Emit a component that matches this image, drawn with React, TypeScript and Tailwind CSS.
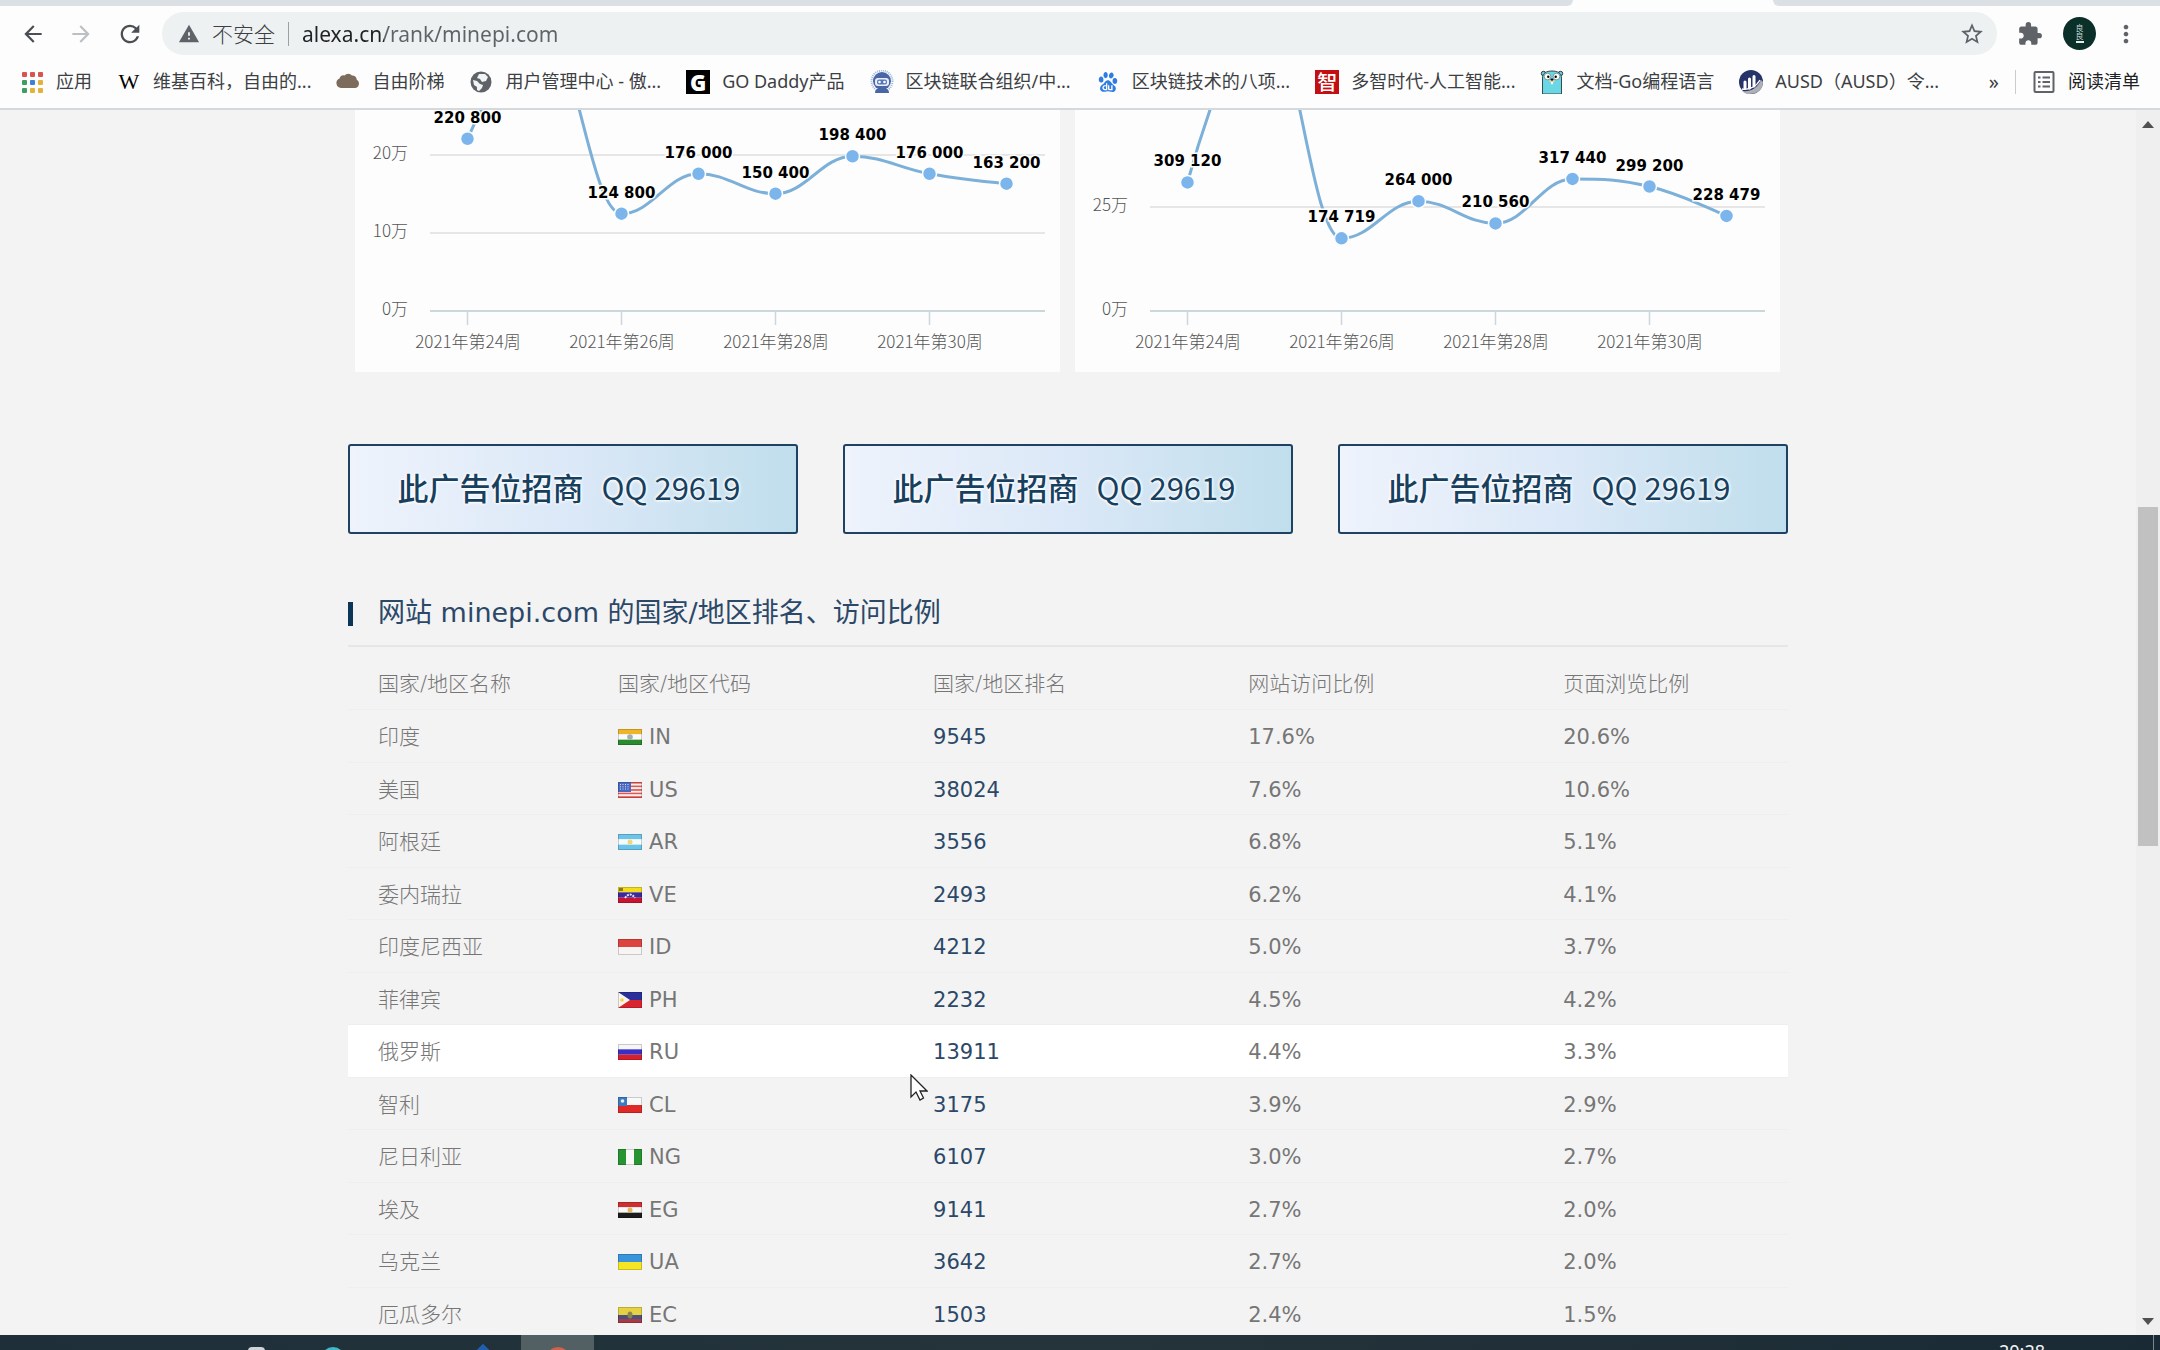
import React from 'react';
import {
  MdArrowBack,
  MdArrowForward,
  MdExtension,
  MdMoreVert,
  MdRefresh,
  MdStarBorder,
  MdWarning,
} from 'react-icons/md';
import { SiBaidu } from 'react-icons/si';

const bookmarks = [
  { icon: 'apps', label: '应用' },
  { icon: 'wiki', label: '维基百科，自由的...' },
  { icon: 'cloud', label: '自由阶梯' },
  { icon: 'globe', label: '用户管理中心 - 傲...' },
  { icon: 'godaddy', label: 'GO Daddy产品' },
  { icon: 'robot', label: '区块链联合组织/中...' },
  { icon: 'baidu', label: '区块链技术的八项...' },
  { icon: 'zhi', label: '多智时代-人工智能...' },
  { icon: 'gopher', label: '文档-Go编程语言' },
  { icon: 'ausd', label: 'AUSD（AUSD）令...' },
];

const countries = [
  { name: '印度', code: 'IN', rank: '9545', visits: '17.6%', views: '20.6%' },
  { name: '美国', code: 'US', rank: '38024', visits: '7.6%', views: '10.6%' },
  { name: '阿根廷', code: 'AR', rank: '3556', visits: '6.8%', views: '5.1%' },
  { name: '委内瑞拉', code: 'VE', rank: '2493', visits: '6.2%', views: '4.1%' },
  { name: '印度尼西亚', code: 'ID', rank: '4212', visits: '5.0%', views: '3.7%' },
  { name: '菲律宾', code: 'PH', rank: '2232', visits: '4.5%', views: '4.2%' },
  { name: '俄罗斯', code: 'RU', rank: '13911', visits: '4.4%', views: '3.3%', active: true },
  { name: '智利', code: 'CL', rank: '3175', visits: '3.9%', views: '2.9%' },
  { name: '尼日利亚', code: 'NG', rank: '6107', visits: '3.0%', views: '2.7%' },
  { name: '埃及', code: 'EG', rank: '9141', visits: '2.7%', views: '2.0%' },
  { name: '乌克兰', code: 'UA', rank: '3642', visits: '2.7%', views: '2.0%' },
  { name: '厄瓜多尔', code: 'EC', rank: '1503', visits: '2.4%', views: '1.5%' },
];

const ipValues = [220800, 355000, 124800, 176000, 150400, 198400, 176000, 163200];
const pvValues = [309120, 718000, 174719, 264000, 210560, 317440, 299200, 228479];

function BookmarkIcon({ name }: { name: string }) {
  switch (name) {
    case 'apps': {
      const colors = ['#d9534f', '#d9534f', '#d9534f', '#3f9c63', '#3b82d6', '#e3b23c', '#3f9c63', '#e3b23c', '#e3b23c'];
      return (
        <svg viewBox="0 0 24 24" className="size-6">
          {colors.map((c, i) => (
            <rect key={i} x={2 + (i % 3) * 8} y={2 + Math.floor(i / 3) * 8} width="5" height="5" rx="1" fill={c} />
          ))}
        </svg>
      );
    }
    case 'wiki':
      return <span className="w-6 text-center font-['Liberation_Serif',serif] text-[22px] leading-6 text-black">W</span>;
    case 'cloud':
      return (
        <svg viewBox="0 0 24 24" className="size-6" fill="#7d6b5b">
          <path d="M5 18a5 5 0 0 1-1.5-9.6 4.5 4.5 0 0 1 5-3 5 5 0 0 1 7.500 .1 4.500 4.500 0 0 1 4.800 4.200A4.500 4.500 0 0 1 19 18Z" />
        </svg>
      );
    case 'globe':
      return (
        <svg viewBox="0 0 24 24" className="size-6">
          <circle cx="12" cy="12" r="10.500" fill="#5f6368" />
          <path d="M4 10l4 1 3 3 3 1-1 3-3 3-2-1v-3l-3-2Z" fill="#f1f3f4" />
          <path d="M10 4h6l3 3-2 4-4 1-2-3-3-1Z" fill="#f1f3f4" />
        </svg>
      );
    case 'godaddy':
      return (
        <span className="flex size-6 items-center justify-center bg-black font-['Open_Sans',sans-serif] text-[22px] leading-6 font-extrabold text-white">
          G
        </span>
      );
    case 'robot':
      return (
        <svg viewBox="0 0 24 24" className="size-6">
          <circle cx="12" cy="11" r="10.500" fill="none" stroke="#9db4dd" strokeWidth="2" strokeDasharray="1 1" />
          <circle cx="12" cy="11" r="9" fill="#4a66a5" />
          <rect x="5" y="8" width="14" height="8" rx="3" fill="#e8eefa" />
          <rect x="7" y="9.500" width="10" height="5" rx="2" fill="#5877b8" />
          <circle cx="9.500" cy="12" r="1.300" fill="#fff" />
          <circle cx="14.500" cy="12" r="1.300" fill="#fff" />
          <path d="M5 23c0-4 3-5 7-5s7 1 7 5Z" fill="#4a66a5" />
        </svg>
      );
    case 'baidu':
      return (
        <span className="flex w-6 justify-center">
          <SiBaidu className="size-5 text-[#2f7de0]" />
        </span>
      );
    case 'zhi':
      return (
        <span className="flex size-6 items-center justify-center bg-[#c40f12] font-['Noto_Sans_CJK_SC',sans-serif] text-[20px] leading-6 font-medium text-white">
          智
        </span>
      );
    case 'gopher':
      return (
        <svg viewBox="0 0 24 24" className="size-6">
          <circle cx="3.500" cy="3.500" r="2.200" fill="#6ad7e5" stroke="#333" />
          <circle cx="20.500" cy="3.500" r="2.200" fill="#6ad7e5" stroke="#333" />
          <path d="M2.500 24V8c0-5 4-7 9.500-7s9.500 2 9.500 7v16Z" fill="#6ad7e5" stroke="#3a4a4f" />
          <circle cx="7.500" cy="6.500" r="3.300" fill="#fff" stroke="#444" strokeWidth=".5" />
          <circle cx="16.500" cy="6.500" r="3.300" fill="#fff" stroke="#444" strokeWidth=".5" />
          <circle cx="8.300" cy="6.800" r="1.200" />
          <circle cx="15.700" cy="6.800" r="1.200" />
          <ellipse cx="12" cy="11" rx="2.800" ry="1.600" fill="#e8cfa8" />
          <ellipse cx="12" cy="9.600" rx="1.500" ry="1.100" />
          <rect x="11" y="12" width="2" height="2.200" fill="#fff" />
        </svg>
      );
    default:
      return (
        <svg viewBox="0 0 24 24" className="size-6">
          <circle cx="12" cy="12" r="12" fill="#263469" />
          <path d="M24 12c0 8-6 12-14 12-3 0-5-1-7-3 8 1 15-2 19-11Z" fill="#aeb0b5" />
          <path d="M3 19c8 1 14-2 18-9" fill="none" stroke="#fff" strokeWidth="1.500" />
          <path d="M6 18v-6M10.500 18v-9M15 16V6.500" stroke="#fff" strokeWidth="3" strokeLinecap="round" />
        </svg>
      );
  }
}

function Stripes({ colors }: { colors: string[] }) {
  const h = 16 / colors.length;
  return (
    <>
      {colors.map((c, i) => (
        <rect key={i} y={i * h} width="24" height={h} fill={c} />
      ))}
    </>
  );
}

function Flag({ code }: { code: string }) {
  return (
    <svg viewBox="0 0 24 16" className="h-4 w-6 shrink-0" aria-hidden="true">
      {code === 'IN' && (
        <>
          <Stripes colors={['#f0b429', '#fafafa', '#2a8a2e']} />
          <circle cx="12" cy="8" r="2.800" fill="#9fb0b4" />
        </>
      )}
      {code === 'US' && (
        <>
          <Stripes colors={['#e2574f', '#fbeeee', '#e2574f', '#fbeeee', '#e2574f', '#fbeeee', '#e2574f', '#fbeeee', '#e2574f']} />
          <rect width="13" height="10" fill="#4a68c0" />
          <path d="M2 2.500h10M2 4.800h10M2 7h10" stroke="#d5def5" strokeDasharray="1 1.500" />
        </>
      )}
      {code === 'AR' && (
        <>
          <Stripes colors={['#6cc5e8', '#f6fbfd', '#6cc5e8']} />
          <circle cx="12" cy="8" r="2.500" fill="#f0d878" />
        </>
      )}
      {code === 'VE' && (
        <>
          <Stripes colors={['#f2dc1c', '#3a2a9c', '#c81432']} />
          <path d="M7 11q5-7 10 0" fill="none" stroke="#e9e4ff" strokeWidth="2" strokeDasharray="2 1" />
          <rect x="1" y="1" width="4" height="3" fill="#8a7a22" />
        </>
      )}
      {code === 'ID' && <Stripes colors={['#dc4440', '#f8f4f4']} />}
      {code === 'PH' && (
        <>
          <Stripes colors={['#2a2f9c', '#d92430']} />
          <path d="M0 0l12 8L0 16Z" fill="#f8f6ec" />
          <circle cx="4" cy="8" r="1.800" fill="#f2d54a" />
        </>
      )}
      {code === 'RU' && <Stripes colors={['#f6f6f6', '#3a2fc4', '#d8202c']} />}
      {code === 'CL' && (
        <>
          <Stripes colors={['#f8f8f8', '#e02a28']} />
          <rect width="9" height="9" fill="#3d7cc0" />
          <circle cx="4.500" cy="4" r="1.800" fill="#e8f1fa" />
        </>
      )}
      {code === 'NG' && (
        <>
          <rect width="24" height="16" fill="#269430" />
          <rect x="8" width="8" height="16" fill="#f8f8f8" />
        </>
      )}
      {code === 'EG' && (
        <>
          <Stripes colors={['#cc3030', '#fafafa', '#1c1c1c']} />
          <circle cx="12" cy="8" r="2.500" fill="#e0b860" />
        </>
      )}
      {code === 'UA' && <Stripes colors={['#3a94dc', '#f7e424']} />}
      {code === 'EC' && (
        <>
          <rect width="24" height="8" fill="#e6d240" />
          <rect y="8" width="24" height="4" fill="#4a5080" />
          <rect y="12" width="24" height="4" fill="#a83a44" />
          <ellipse cx="12" cy="8" rx="2.500" ry="3.500" fill="#8a8450" />
        </>
      )}
      <rect x=".5" y=".5" width="23" height="15" fill="none" stroke="#000" strokeOpacity=".18" />
    </svg>
  );
}

// smooth line through the points, flat at local minima and maxima
function spline(pts: number[][]) {
  const controls = pts.map(([x, y], i) => {
    const prev = pts[i - 1];
    const next = pts[i + 1];
    if (!prev || !next) return { left: [x, y], right: [x, y] };
    const lx = (1.5 * x + prev[0]) / 2.5;
    const rx = (1.5 * x + next[0]) / 2.5;
    let ly = (1.5 * y + prev[1]) / 2.5;
    let ry = (1.5 * y + next[1]) / 2.5;
    const fix = ((ry - ly) * (rx - x)) / (rx - lx) + y - ry;
    ly += fix;
    ry += fix;
    if (ly > prev[1] && ly > y) {
      ly = Math.max(prev[1], y);
      ry = 2 * y - ly;
    } else if (ly < prev[1] && ly < y) {
      ly = Math.min(prev[1], y);
      ry = 2 * y - ly;
    }
    if (ry > next[1] && ry > y) {
      ry = Math.max(next[1], y);
      ly = 2 * y - ry;
    } else if (ry < next[1] && ry < y) {
      ry = Math.min(next[1], y);
      ly = 2 * y - ry;
    }
    return { left: [lx, ly], right: [rx, ry] };
  });
  return pts
    .map((p, i) => (i === 0 ? `M${p}` : `C${controls[i - 1].right} ${controls[i].left} ${p}`))
    .join(' ');
}

function Chart({ title, values, step, stepHeight }: { title: string; values: number[]; step: number; stepHeight: number }) {
  const base = 201;
  const pts = values.map((v, i) => [112.5 + i * 77, base - (v / (step * 10000)) * stepHeight]);
  const grid = [0, 1, 2].filter((n) => base - n * stepHeight > 20);

  return (
    <div className="flex-1 bg-[#fdfdfd]">
      <svg viewBox="0 0 705 262" className="block h-auto w-full" role="img" aria-label={title}>
        {grid.map((n) => (
          <g key={n}>
            <line x1="75" x2="690" y1={base - n * stepHeight} y2={base - n * stepHeight} stroke={n ? '#e6e6e6' : '#ccd6dd'} strokeWidth="2" />
            <text
              x="53"
              y={base + 4 - n * stepHeight}
              textAnchor="end"
              className="fill-[#555] font-['Noto_Sans_CJK_SC',sans-serif] text-[17px] font-light"
            >
              {n * step}万
            </text>
          </g>
        ))}
        {[24, 26, 28, 30].map((week, i) => (
          <g key={week}>
            <line x1={112.5 + i * 154} x2={112.5 + i * 154} y1="201" y2="215" stroke="#ccd6dd" strokeWidth="1.500" />
            <text
              x={113 + i * 154}
              y="238"
              textAnchor="middle"
              className="fill-[#555] font-['Noto_Sans_CJK_SC',sans-serif] text-[17px] font-light"
            >
              2021年第{week}周
            </text>
          </g>
        ))}
        <path d={spline(pts)} fill="none" stroke="#7cb0d8" strokeWidth="3" />
        {pts.map(([x, y], i) =>
          y < 0 ? null : (
            <g key={i}>
              <circle cx={x} cy={y} r="7" fill="#7cb5ec" stroke="#fdfdfd" strokeWidth="1.500" />
              <text
                x={x}
                y={y - 16}
                textAnchor="middle"
                stroke="#fdfdfd"
                strokeWidth="3"
                paintOrder="stroke"
                className="fill-black font-['DejaVu_Sans',sans-serif] text-[15px] font-bold"
              >
                {String(values[i]).replace(/(\d{3})$/, ' $1')}
              </text>
            </g>
          )
        )}
      </svg>
    </div>
  );
}

function BrowserBar() {
  return (
    <header className="shrink-0 border-b-2 border-[#d6d9db] bg-[#fdfdfd] font-['Noto_Sans','Noto_Sans_CJK_SC',sans-serif] text-[#3c4043]">
      <div className="flex h-[6px] bg-[#fdfdfd]">
        <div className="flex-[1573] rounded-br-lg bg-[#dbe0e4]" />
        <div className="flex-[200]" />
        <div className="flex-[387] rounded-bl-lg bg-[#dbe0e4]" />
      </div>

      <div className="flex items-center pt-[6px] pr-5 pl-5">
        <button aria-label="后退" className="mr-[22px] text-[#4b4f53]">
          <MdArrowBack className="size-[26px]" />
        </button>
        <button aria-label="前进" className="mr-[22px] text-[#bdc0c3]">
          <MdArrowForward className="size-[26px]" />
        </button>
        <button aria-label="刷新" className="mr-[18px] text-[#4b4f53]">
          <MdRefresh className="size-[28px]" />
        </button>
        <div className="flex h-[43px] flex-1 items-center rounded-full bg-[#edf1f2] pr-3 pl-4">
          <MdWarning className="size-[22px] text-[#5f6368]" />
          <span className="ml-3 text-[21px] leading-[42px] font-light text-[#3c4043]">不安全</span>
          <span className="mx-[13px] h-6 w-px bg-[#9aa0a6]" />
          <input
            aria-label="地址"
            defaultValue="alexa.cn/rank/minepi.com"
            className="h-[42px] min-w-0 flex-1 bg-linear-to-r from-[#202124] from-[82px] to-[#5f6368] to-[82px] bg-clip-text text-[21px] text-transparent outline-none"
          />
          <button aria-label="收藏" className="text-[#5f6368]">
            <MdStarBorder className="size-[26px]" />
          </button>
        </div>
        <button aria-label="扩展程序" className="ml-5 text-[#5f6368]">
          <MdExtension className="size-[26px]" />
        </button>
        <button
          aria-label="个人资料"
          className="ml-5 flex size-[33px] flex-col items-center justify-center rounded-full bg-[#0a3029] text-[8px] leading-[8px] text-[#c9d6d2]"
        >
          <span>良</span>
          <span>良</span>
          <span className="mt-px h-[2px] w-2 bg-[#e6ecea]" />
        </button>
        <button aria-label="更多" className="ml-4 text-[#5f6368]">
          <MdMoreVert className="size-7" />
        </button>
      </div>

      <nav className="flex h-[53px] items-center pr-5 pl-5 text-[18px] whitespace-nowrap">
        <div className="flex items-center gap-[25px]">
          {bookmarks.map((b) => (
            <a key={b.icon} href="#" className="flex items-center gap-3">
              <BookmarkIcon name={b.icon} />
              {b.label}
            </a>
          ))}
        </div>
        <button aria-label="更多书签" className="ml-auto text-[20px]">
          »
        </button>
        <span className="mx-4 h-6 w-px bg-[#c9cccf]" />
        <a href="#" className="flex items-center gap-3 text-[#202124]">
          <svg viewBox="0 0 24 24" className="size-6" fill="none" stroke="#5f6368" strokeWidth="2">
            <rect x="2.500" y="2" width="19" height="20" rx="1" />
            <path d="M6 7.500h2.500M6 12h2.500M6 16.500h2.500M10.500 7.500h7.500M10.500 12h7.500M10.500 16.500h7.500" />
          </svg>
          阅读清单
        </a>
      </nav>
    </header>
  );
}

function AdBanner() {
  return (
    <a
      href="#"
      className="flex h-[90px] flex-1 items-center justify-center gap-[18px] rounded-[3px] border-2 border-[#1f4263] bg-linear-to-r from-[#eef3fc] via-[#dbe8f7] to-[#c0deec] pr-2 pb-1 text-[31px] text-[#17405f] [text-shadow:0_0_3px_#fff,0_0_3px_#fff,0_0_4px_#fff]"
    >
      <span className="font-medium">此广告位招商</span>
      <span>QQ 29619</span>
    </a>
  );
}

function CountryTable() {
  return (
    <table className="mt-[10px] w-full table-fixed text-left text-[21px] leading-6 text-[#767676]">
      <colgroup>
        <col className="w-[16.67%]" />
        <col className="w-[21.88%]" />
        <col className="w-[21.88%]" />
        <col className="w-[21.88%]" />
        <col />
      </colgroup>
      <thead>
        <tr className="h-[52px] border-b border-[#eeeeee]">
          <th className="pt-[3px] pl-[30px] font-light">国家/地区名称</th>
          <th className="pt-[3px] pl-[30px] font-light">国家/地区代码</th>
          <th className="pt-[3px] pl-[30px] font-light">国家/地区排名</th>
          <th className="pt-[3px] pl-[30px] font-light">网站访问比例</th>
          <th className="pt-[3px] pl-[30px] font-light">页面浏览比例</th>
        </tr>
      </thead>
      <tbody>
        {countries.map((c) => (
          <tr key={c.code} className={`border-b border-[#eeeeee] odd:h-[53px] even:h-[52px] hover:bg-white ${c.active ? 'bg-white' : ''}`}>
            <td className="pt-[3px] pl-[30px] font-light">{c.name}</td>
            <td className="pt-[3px] pl-[30px]">
              <span className="flex items-center gap-[7px]">
                <Flag code={c.code} />
                {c.code}
              </span>
            </td>
            <td className="pt-[3px] pl-[30px]">
              <a href="#" className="text-[#2b4868]">
                {c.rank}
              </a>
            </td>
            <td className="pt-[3px] pl-[30px]">{c.visits}</td>
            <td className="pt-[3px] pl-[30px]">{c.views}</td>
          </tr>
        ))}
      </tbody>
    </table>
  );
}

function Taskbar() {
  return (
    <footer className="flex h-[15px] shrink-0 items-start overflow-hidden bg-linear-to-r from-[#1e2f3a] via-[#25343a] to-[#1a2a35] pl-[248px]">
      <span className="mt-3 h-4 w-[17px] shrink-0 rounded-t bg-[#cdd3d6]" />
      <span className="mt-3 ml-14 size-6 shrink-0 rounded-full bg-[#3fb8c9]" />
      <span className="mt-3 ml-[130px] size-4 shrink-0 rotate-45 bg-[#1f5fae]" />
      <span className="ml-[30px] flex h-[15px] w-[73px] shrink-0 justify-center bg-[#525f63]">
        <span className="mt-3 size-6 shrink-0 rounded-full bg-[#d4604c]" />
      </span>
      <time className="mt-1 ml-auto font-['Noto_Sans',sans-serif] text-[18px] leading-6 text-[#f2f4f5]">20:28</time>
      <span className="mr-[6px] ml-[108px] h-[15px] w-px shrink-0 bg-[#7c878d]" />
    </footer>
  );
}

export default function App() {
  return (
    <div className="relative flex h-screen flex-col overflow-hidden bg-[#f3f3f3]">
      <BrowserBar />

      <div className="flex min-h-0 flex-1">
        <main className="flex-1 overflow-hidden font-['DejaVu_Sans','Noto_Sans_CJK_SC',sans-serif]">
          <div className="mx-auto max-w-[1440px]">
            <div className="flex gap-[15px] pr-2 pl-[7px]">
              <Chart title="IP" values={ipValues} step={10} stepHeight={78} />
              <Chart title="PV" values={pvValues} step={25} stepHeight={104} />
            </div>

            <div className="mt-[72px] flex gap-[45px] font-['Noto_Sans_CJK_SC',sans-serif]">
              <AdBanner />
              <AdBanner />
              <AdBanner />
            </div>

            <h2 className="mt-11 flex h-[69px] items-center border-b-2 border-[#e6e6e6] pt-1 text-[27px] text-[#2b4868]">
              <span className="mr-[25px] h-6 w-[5px] bg-[#0c3557]" />
              网站 minepi.com 的国家/地区排名、访问比例
            </h2>
            <CountryTable />
          </div>
        </main>

        <div className="flex w-6 flex-col items-center justify-between bg-[#efefef] py-2">
          <button aria-label="向上滚动" className="flex h-3 w-full items-center justify-center">
            <svg viewBox="0 0 12 7" className="h-[7px] w-3" fill="#505050">
              <path d="M0 7l6-7 6 7Z" />
            </svg>
          </button>
          <div className="flex w-full flex-1 flex-col items-center">
            <div className="flex-[377]" />
            <div className="w-5 flex-[339] bg-[#c1c1c1]" />
            <div className="flex-[469]" />
          </div>
          <button aria-label="向下滚动" className="flex h-3 w-full items-center justify-center">
            <svg viewBox="0 0 12 7" className="h-[7px] w-3" fill="#505050">
              <path d="M0 0l6 7 6-7Z" />
            </svg>
          </button>
        </div>
      </div>

      <Taskbar />

      {/* mouse pointer */}
      <svg viewBox="0 0 18 27" className="pointer-events-none absolute top-[1074px] left-[910px] h-[27px] w-[18px]">
        <path d="M1 1v22l5-5 4 8 3.500-2-3.500-7h7Z" fill="#fff" stroke="#222" strokeWidth="1.300" />
      </svg>
    </div>
  );
}
